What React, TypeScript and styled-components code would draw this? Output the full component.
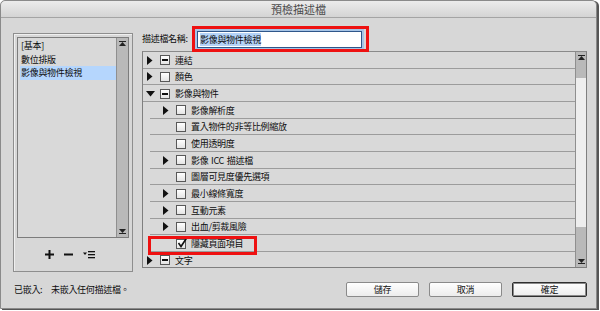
import React from "react";
import styled, { createGlobalStyle } from "styled-components";

const Global = createGlobalStyle`
  html, body { margin: 0; padding: 0; background: #ffffff; }
  body { font-family: "Noto Sans CJK TC", "Noto Sans", sans-serif; }
  #root { width: 600px; height: 311px; overflow: hidden; }
`;

const textFont = `
  font-size: 9px;
  letter-spacing: -0.3px;
  word-spacing: 1px;
  color: #0d0d0d;
  white-space: pre;
`;

const Window = styled.div`
  width: 597px;
  height: 309px;
  box-sizing: border-box;
  border: 1px solid #8a8a8a;
  border-radius: 5px 5px 0 0;
  background: #d7d7d7;
  display: flex;
  flex-direction: column;
  overflow: hidden;
  box-shadow: 2px 1px 0 #555555;
`;

const TitleBar = styled.div`
  height: 16px;
  border-bottom: 1px solid #a4a4a4;
  background: linear-gradient(#ececec, #d4d4d4);
  border-radius: 5px 5px 0 0;
  display: flex;
  align-items: center;
  justify-content: center;
  font-size: 11px;
  color: #4a4a4a;
  line-height: 16px;
`;

const Body = styled.div`
  flex: 1;
  display: flex;
  flex-direction: column;
  padding: 8px 9px 0 12px;
`;

const MainRow = styled.div`
  display: flex;
  gap: 9px;
  height: 246px;
`;

const LeftPanel = styled.div`
  width: 120px;
  margin-top: 7px;
  height: 239px;
  box-sizing: border-box;
  border: 1px solid #8e8e8e;
  box-shadow: inset 1px 1px 0 #efefef;
  padding: 3px 3px 0 3px;
  display: flex;
  flex-direction: column;
`;

const ListBox = styled.div`
  height: 201px;
  box-sizing: border-box;
  border: 1px solid #7c7c7c;
  background: #d9d9d9;
  display: flex;
`;

const ListItems = styled.div`
  flex: 1;
  padding: 1px 0 0 2px;
`;

const ListItem = styled.div<{ $selected?: boolean }>`
  ${textFont}
  height: 13.5px;
  line-height: 13.5px;
  padding-left: 1px;
  background: ${(p) => (p.$selected ? "#b5d6fd" : "transparent")};
`;

const VScroll = styled.div<{ $w: number }>`
  width: ${(p) => p.$w}px;
  box-sizing: border-box;
  border-left: 1px solid #8f8f8f;
  display: flex;
  flex-direction: column;
`;

const ScrollSeg = styled.div<{ $h?: number; $light?: boolean; $end?: boolean }>`
  ${(p) => (p.$h ? `height: ${p.$h}px;` : "flex: 1;")}
  background: ${(p) => (p.$light ? "#eeeeee" : "#b9b9b9")};
  display: flex;
  flex-direction: column;
  align-items: center;
  justify-content: ${(p) => (p.$end ? "flex-end" : "flex-start")};
  padding: 3px 0;
  box-sizing: border-box;
`;

const IconRow = styled.div`
  height: 33px;
  display: flex;
  align-items: center;
  justify-content: center;
  gap: 10px;
  padding-right: 6px;
`;

const RightCol = styled.div`
  flex: 1;
  display: flex;
  flex-direction: column;
`;

const NameRow = styled.div`
  height: 25px;
  display: flex;
  align-items: center;
  gap: 9px;
`;

const Label = styled.span`
  ${textFont}
  width: 46px;
`;

const InputWrap = styled.div`
  position: relative;
  margin-top: 1px;
`;

const Input = styled.div`
  width: 165px;
  height: 17px;
  box-sizing: border-box;
  border: 1px solid #2f568a;
  box-shadow: 0 0 0 2px #a6c4e6;
  background: #ffffff;
  ${textFont}
  line-height: 15px;
  padding-left: 2px;
`;

const Selected = styled.span`
  background: #b4d3f8;
`;

const RedBox = styled.div`
  position: absolute;
  border: 3px solid #ee1111;
  box-sizing: border-box;
  pointer-events: none;
  z-index: 3;
`;

const Tree = styled.div`
  height: 217px;
  box-sizing: border-box;
  border: 1px solid #7f7f7f;
  border-top-color: #8a8a8a;
  background: #d9d9d9;
  display: flex;
`;

const TreeRows = styled.div`
  flex: 1;
  overflow: hidden;
  position: relative;
`;

const TreeRow = styled.div<{ $level: number }>`
  position: relative;
  height: 16.667px;
  box-sizing: border-box;
  display: flex;
  align-items: center;
  padding-left: ${(p) => 4 + p.$level * 16}px;
  ${textFont}
  &::after {
    content: "";
    position: absolute;
    left: ${(p) => (p.$level > 0 ? 7 : 0)}px;
    right: 0;
    bottom: 0;
    height: 1px;
    background: #9c9c9c;
  }
`;

const TriSlot = styled.span`
  width: 13px;
  height: 10px;
  display: flex;
  align-items: center;
  flex-shrink: 0;
`;

const Check = styled.span`
  position: relative;
  width: 10px;
  height: 10px;
  box-sizing: border-box;
  border: 1px solid #585858;
  background: linear-gradient(#ffffff, #e4e4e4);
  display: flex;
  align-items: center;
  justify-content: center;
  flex-shrink: 0;
  margin-right: 5px;
`;

const Minus = styled.span`
  width: 6px;
  height: 2px;
  background: #111;
`;

const CheckMark = styled.svg`
  position: absolute;
  left: 0;
  top: -3px;
  overflow: visible;
`;

const Footer = styled.div`
  margin-top: 10px;
  height: 15px;
  display: flex;
  align-items: center;
`;

const FootLabel = styled.span`
  ${textFont}
  width: 37px;
  padding-left: 1px;
`;

const FootText = styled.span`
  ${textFont}
  flex: 1;
`;

const Buttons = styled.div`
  display: flex;
  gap: 10px;
`;

const Button = styled.div<{ $w: number; $default?: boolean }>`
  width: ${(p) => p.$w}px;
  height: 15px;
  box-sizing: border-box;
  border: 1px solid ${(p) => (p.$default ? "#2e2e2e" : "#8a8a8a")};
  ${(p) => (p.$default ? "box-shadow: inset 0 0 0 1px #8a8a8a;" : "")}
  border-radius: 2px;
  background: linear-gradient(#ffffff, #ececec);
  ${textFont}
  line-height: 13px;
  text-align: center;
  color: #111;
`;

const TriRight = () => (
  <svg width="6" height="9" viewBox="0 0 6 9">
    <polygon points="0,0 5.5,4.5 0,9" fill="#111" />
  </svg>
);

const TriDown = () => (
  <svg width="9" height="6" viewBox="0 0 9 6" style={{ marginLeft: -1 }}>
    <polygon points="0,0 9,0 4.5,5.5" fill="#111" />
  </svg>
);

const ArrowUp = () => (
  <svg width="7" height="5" viewBox="0 0 7 5">
    <rect x="0" y="0" width="7" height="1" fill="#222" />
    <polygon points="3.5,1 7,5 0,5" fill="#222" />
  </svg>
);

const ArrowDown = () => (
  <svg width="7" height="5" viewBox="0 0 7 5">
    <polygon points="0,0 7,0 3.5,4" fill="#222" />
    <rect x="0" y="4" width="7" height="1" fill="#222" />
  </svg>
);

type RowDef = {
  level: number;
  tri?: "right" | "down";
  state?: "none" | "minus" | "check";
  label: string;
  mark?: boolean;
};

const rows: RowDef[] = [
  { level: 0, tri: "right", state: "minus", label: "連結" },
  { level: 0, tri: "right", state: "none", label: "顏色" },
  { level: 0, tri: "down", state: "minus", label: "影像與物件" },
  { level: 1, tri: "right", state: "none", label: "影像解析度" },
  { level: 1, state: "none", label: "置入物件的非等比例縮放" },
  { level: 1, state: "none", label: "使用透明度" },
  { level: 1, tri: "right", state: "none", label: "影像 ICC 描述檔" },
  { level: 1, state: "none", label: "圖層可見度優先選項" },
  { level: 1, tri: "right", state: "none", label: "最小線條寬度" },
  { level: 1, tri: "right", state: "none", label: "互動元素" },
  { level: 1, tri: "right", state: "none", label: "出血/剪裁風險" },
  { level: 1, state: "check", label: "隱藏頁面項目", mark: true },
  { level: 0, tri: "right", state: "minus", label: "文字" },
];

export default function App() {
  return (
    <>
      <Global />
      <Window>
        <TitleBar>預檢描述檔</TitleBar>
        <Body>
          <MainRow>
            <LeftPanel>
              <ListBox>
                <ListItems>
                  <ListItem>[基本]</ListItem>
                  <ListItem>數位排版</ListItem>
                  <ListItem $selected>影像與物件檢視</ListItem>
                </ListItems>
                <VScroll $w={12}>
                  <ScrollSeg>
                    <ArrowUp />
                  </ScrollSeg>
                  <ScrollSeg $h={14} $end>
                    <ArrowDown />
                  </ScrollSeg>
                </VScroll>
              </ListBox>
              <IconRow>
                <svg width="9" height="9" viewBox="0 0 9 9">
                  <rect x="3.5" y="0" width="2" height="9" fill="#111" />
                  <rect x="0" y="3.5" width="9" height="2" fill="#111" />
                </svg>
                <svg width="9" height="9" viewBox="0 0 9 9">
                  <rect x="0" y="3.5" width="9" height="2" fill="#111" />
                </svg>
                <svg width="12" height="9" viewBox="0 0 12 9">
                  <polygon points="0,2.5 4,2.5 2,5" fill="#111" />
                  <rect x="5" y="1" width="7" height="1.3" fill="#111" />
                  <rect x="5" y="4" width="7" height="1.3" fill="#111" />
                  <rect x="5" y="7" width="7" height="1.3" fill="#111" />
                </svg>
              </IconRow>
            </LeftPanel>
            <RightCol>
              <NameRow>
                <Label>描述檔名稱:</Label>
                <InputWrap>
                  <Input>
                    <Selected>影像與物件檢視</Selected>
                  </Input>
                  <RedBox style={{ left: -5, top: -5, width: 177, height: 26 }} />
                </InputWrap>
              </NameRow>
              <Tree>
                <TreeRows>
                  {rows.map((r, i) => (
                    <TreeRow key={i} $level={r.level}>
                      <TriSlot>
                        {r.tri === "right" && <TriRight />}
                        {r.tri === "down" && <TriDown />}
                      </TriSlot>
                      <Check>
                        {r.state === "minus" && <Minus />}
                        {r.state === "check" && (
                          <CheckMark width="11" height="11" viewBox="0 0 11 11">
                            <polyline
                              points="1.5,6 4,9.5 10,0.5"
                              fill="none"
                              stroke="#111"
                              strokeWidth="1.6"
                            />
                          </CheckMark>
                        )}
                      </Check>
                      <span>{r.label}</span>
                      {r.mark && (
                        <RedBox style={{ left: 5, top: 1, width: 109, height: 19 }} />
                      )}
                    </TreeRow>
                  ))}
                </TreeRows>
                <VScroll $w={11}>
                  <ScrollSeg $h={26}>
                    <ArrowUp />
                  </ScrollSeg>
                  <ScrollSeg $light />
                  <ScrollSeg $h={40} $end>
                    <ArrowDown />
                  </ScrollSeg>
                </VScroll>
              </Tree>
            </RightCol>
          </MainRow>
          <Footer>
            <FootLabel>已嵌入:</FootLabel>
            <FootText>未嵌入任何描述檔。</FootText>
            <Buttons>
              <Button $w={73}>儲存</Button>
              <Button $w={73}>取消</Button>
              <Button $w={75} $default>
                確定
              </Button>
            </Buttons>
          </Footer>
        </Body>
      </Window>
    </>
  );
}
